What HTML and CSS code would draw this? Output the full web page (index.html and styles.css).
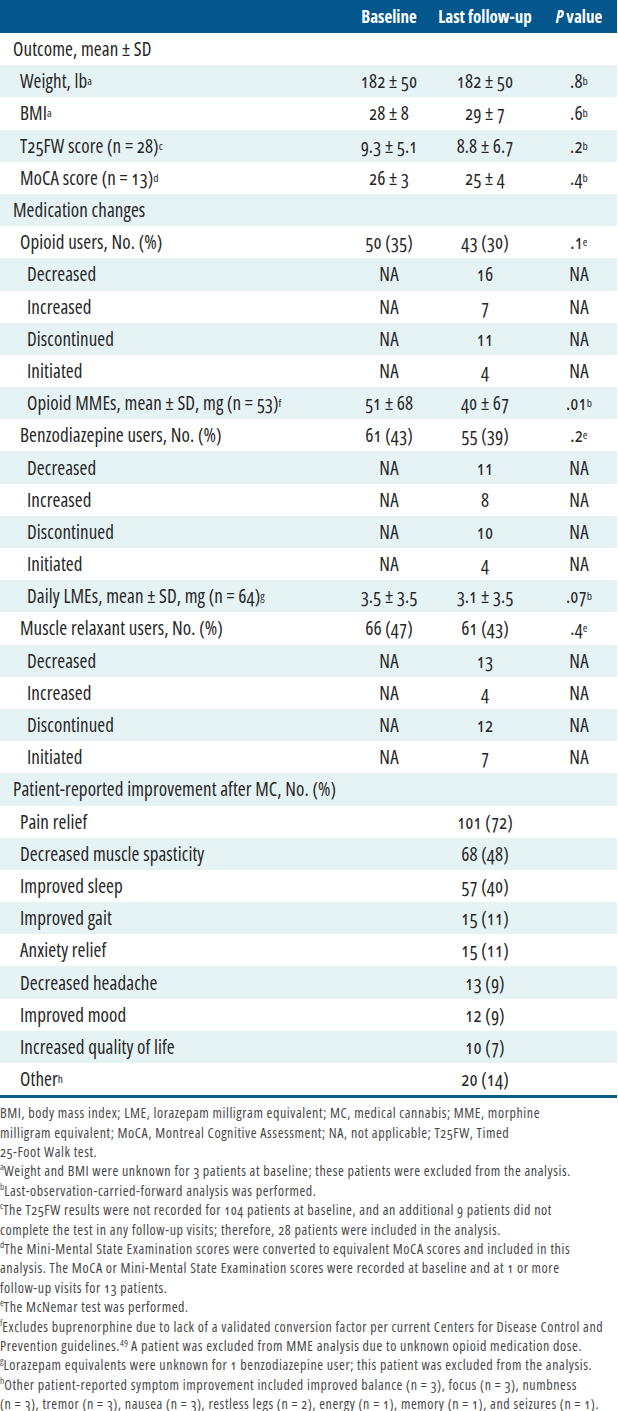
FILE: index.html
```html
<!DOCTYPE html>
<html lang="en">
<head>
<meta charset="utf-8">
<title>Outcomes table</title>
<link rel="stylesheet" href="styles.css">
</head>
<body>
<div class="table">
  <div class="row head">
    <div class="c lab"></div>
    <div class="c">Baseline</div>
    <div class="c">Last follow-up</div>
    <div class="c pv"><i>P</i>&nbsp;value</div>
  </div>

  <div class="row"><div class="c lab l0">Outcome, mean ± SD</div><div class="c"></div><div class="c"></div><div class="c pv"></div></div>
  <div class="row"><div class="c lab l1">Weight, lb<sup>a</sup></div><div class="c">182 ± 50</div><div class="c">182 ± 50</div><div class="c pv">.8<sup>b</sup></div></div>
  <div class="row"><div class="c lab l1">BMI<sup>a</sup></div><div class="c">28 ± 8</div><div class="c">29 ± 7</div><div class="c pv">.6<sup>b</sup></div></div>
  <div class="row"><div class="c lab l1">T25FW score (n = 28)<sup>c</sup></div><div class="c">9.3 ± 5.1</div><div class="c">8.8 ± 6.7</div><div class="c pv">.2<sup>b</sup></div></div>
  <div class="row"><div class="c lab l1">MoCA score (n = 13)<sup>d</sup></div><div class="c">26 ± 3</div><div class="c">25 ± 4</div><div class="c pv">.4<sup>b</sup></div></div>

  <div class="row"><div class="c lab l0">Medication changes</div><div class="c"></div><div class="c"></div><div class="c pv"></div></div>
  <div class="row"><div class="c lab l1">Opioid users, No. (%)</div><div class="c">50 (35)</div><div class="c">43 (30)</div><div class="c pv">.1<sup>e</sup></div></div>
  <div class="row"><div class="c lab l2">Decreased</div><div class="c">NA</div><div class="c">16</div><div class="c pv">NA</div></div>
  <div class="row"><div class="c lab l2">Increased</div><div class="c">NA</div><div class="c">7</div><div class="c pv">NA</div></div>
  <div class="row"><div class="c lab l2">Discontinued</div><div class="c">NA</div><div class="c">11</div><div class="c pv">NA</div></div>
  <div class="row"><div class="c lab l2">Initiated</div><div class="c">NA</div><div class="c">4</div><div class="c pv">NA</div></div>
  <div class="row"><div class="c lab l2">Opioid MMEs, mean ± SD, mg (n = 53)<sup>f</sup></div><div class="c">51 ± 68</div><div class="c">40 ± 67</div><div class="c pv">.01<sup>b</sup></div></div>
  <div class="row"><div class="c lab l1">Benzodiazepine users, No. (%)</div><div class="c">61 (43)</div><div class="c">55 (39)</div><div class="c pv">.2<sup>e</sup></div></div>
  <div class="row"><div class="c lab l2">Decreased</div><div class="c">NA</div><div class="c">11</div><div class="c pv">NA</div></div>
  <div class="row"><div class="c lab l2">Increased</div><div class="c">NA</div><div class="c">8</div><div class="c pv">NA</div></div>
  <div class="row"><div class="c lab l2">Discontinued</div><div class="c">NA</div><div class="c">10</div><div class="c pv">NA</div></div>
  <div class="row"><div class="c lab l2">Initiated</div><div class="c">NA</div><div class="c">4</div><div class="c pv">NA</div></div>
  <div class="row"><div class="c lab l2">Daily LMEs, mean ± SD, mg (n = 64)<sup>g</sup></div><div class="c">3.5 ± 3.5</div><div class="c">3.1 ± 3.5</div><div class="c pv">.07<sup>b</sup></div></div>
  <div class="row"><div class="c lab l1">Muscle relaxant users, No. (%)</div><div class="c">66 (47)</div><div class="c">61 (43)</div><div class="c pv">.4<sup>e</sup></div></div>
  <div class="row"><div class="c lab l2">Decreased</div><div class="c">NA</div><div class="c">13</div><div class="c pv">NA</div></div>
  <div class="row"><div class="c lab l2">Increased</div><div class="c">NA</div><div class="c">4</div><div class="c pv">NA</div></div>
  <div class="row"><div class="c lab l2">Discontinued</div><div class="c">NA</div><div class="c">12</div><div class="c pv">NA</div></div>
  <div class="row"><div class="c lab l2">Initiated</div><div class="c">NA</div><div class="c">7</div><div class="c pv">NA</div></div>

  <div class="row"><div class="c lab l0">Patient-reported improvement after MC, No. (%)</div><div class="c"></div><div class="c"></div><div class="c pv"></div></div>
  <div class="row"><div class="c lab l1">Pain relief</div><div class="c"></div><div class="c">101 (72)</div><div class="c pv"></div></div>
  <div class="row"><div class="c lab l1">Decreased muscle spasticity</div><div class="c"></div><div class="c">68 (48)</div><div class="c pv"></div></div>
  <div class="row"><div class="c lab l1">Improved sleep</div><div class="c"></div><div class="c">57 (40)</div><div class="c pv"></div></div>
  <div class="row"><div class="c lab l1">Improved gait</div><div class="c"></div><div class="c">15 (11)</div><div class="c pv"></div></div>
  <div class="row"><div class="c lab l1">Anxiety relief</div><div class="c"></div><div class="c">15 (11)</div><div class="c pv"></div></div>
  <div class="row"><div class="c lab l1">Decreased headache</div><div class="c"></div><div class="c">13 (9)</div><div class="c pv"></div></div>
  <div class="row"><div class="c lab l1">Improved mood</div><div class="c"></div><div class="c">12 (9)</div><div class="c pv"></div></div>
  <div class="row"><div class="c lab l1">Increased quality of life</div><div class="c"></div><div class="c">10 (7)</div><div class="c pv"></div></div>
  <div class="row"><div class="c lab l1">Other<sup>h</sup></div><div class="c"></div><div class="c">20 (14)</div><div class="c pv"></div></div>
</div>

<div class="notes">
  <p>BMI, body mass index; LME, lorazepam milligram equivalent; MC, medical cannabis; MME, morphine<br>milligram equivalent; MoCA, Montreal Cognitive Assessment; NA, not applicable; T25FW, Timed<br>25-Foot Walk test.</p>
  <p><sup>a</sup>Weight and BMI were unknown for 3 patients at baseline; these patients were excluded from the analysis.</p>
  <p><sup>b</sup>Last-observation-carried-forward analysis was performed.</p>
  <p><sup>c</sup>The T25FW results were not recorded for 104 patients at baseline, and an additional 9 patients did not<br>complete the test in any follow-up visits; therefore, 28 patients were included in the analysis.</p>
  <p><sup>d</sup>The Mini-Mental State Examination scores were converted to equivalent MoCA scores and included in this<br>analysis. The MoCA or Mini-Mental State Examination scores were recorded at baseline and at 1 or more<br>follow-up visits for 13 patients.</p>
  <p><sup>e</sup>The McNemar test was performed.</p>
  <p><sup>f</sup>Excludes buprenorphine due to lack of a validated conversion factor per current Centers for Disease Control and<br>Prevention guidelines.<sup>49</sup> A patient was excluded from MME analysis due to unknown opioid medication dose.</p>
  <p><sup>g</sup>Lorazepam equivalents were unknown for 1 benzodiazepine user; this patient was excluded from the analysis.</p>
  <p><sup>h</sup>Other patient-reported symptom improvement included improved balance (n = 3), focus (n = 3), numbness<br>(n = 3), tremor (n = 3), nausea (n = 3), restless legs (n = 2), energy (n = 1), memory (n = 1), and seizures (n = 1).</p>
</div>
</body>
</html>
```

FILE: styles.css
```css
* { box-sizing: border-box; }

body {
  margin: 0;
  background: #ffffff;
  font-family: "Open Sans", "Liberation Sans", sans-serif;
  font-stretch: 75%;
  font-variant-numeric: oldstyle-nums;
  color: #262626;
}

.table {
  width: 617px;
  border-bottom: 3px solid #0a5a8c;
}

.row {
  display: grid;
  grid-template-columns: 341px 96px 96px 84px;
  height: 32.2px;
  font-size: 19px;
  letter-spacing: 0.1px;
}

.row:nth-child(odd) {
  background: #e6f3f5;
}

.row.head {
  height: 33px;
  background: #03578d;
  color: #ffffff;
  font-weight: bold;
  font-size: 17px;
  letter-spacing: 0;
}

.c {
  display: flex;
  align-items: center;
  justify-content: center;
  white-space: nowrap;
}

.c.lab {
  justify-content: flex-start;
}

.c.pv {
  padding-left: 8px;
}

.l0 { padding-left: 13px; }
.l1 { padding-left: 20px; }
.l2 { padding-left: 27px; }

sup {
  font-size: 0.6em;
  line-height: 0;
  vertical-align: 0.7em;
}

.notes {
  padding-top: 5px;
  font-size: 14px;
  letter-spacing: 0.58px;
  line-height: 19.4px;
  color: #474747;
  white-space: nowrap;
}

.notes p {
  margin: 0;
}

.notes sup {
  font-size: 0.66em;
  letter-spacing: 0;
  vertical-align: 0.6em;
}
```
